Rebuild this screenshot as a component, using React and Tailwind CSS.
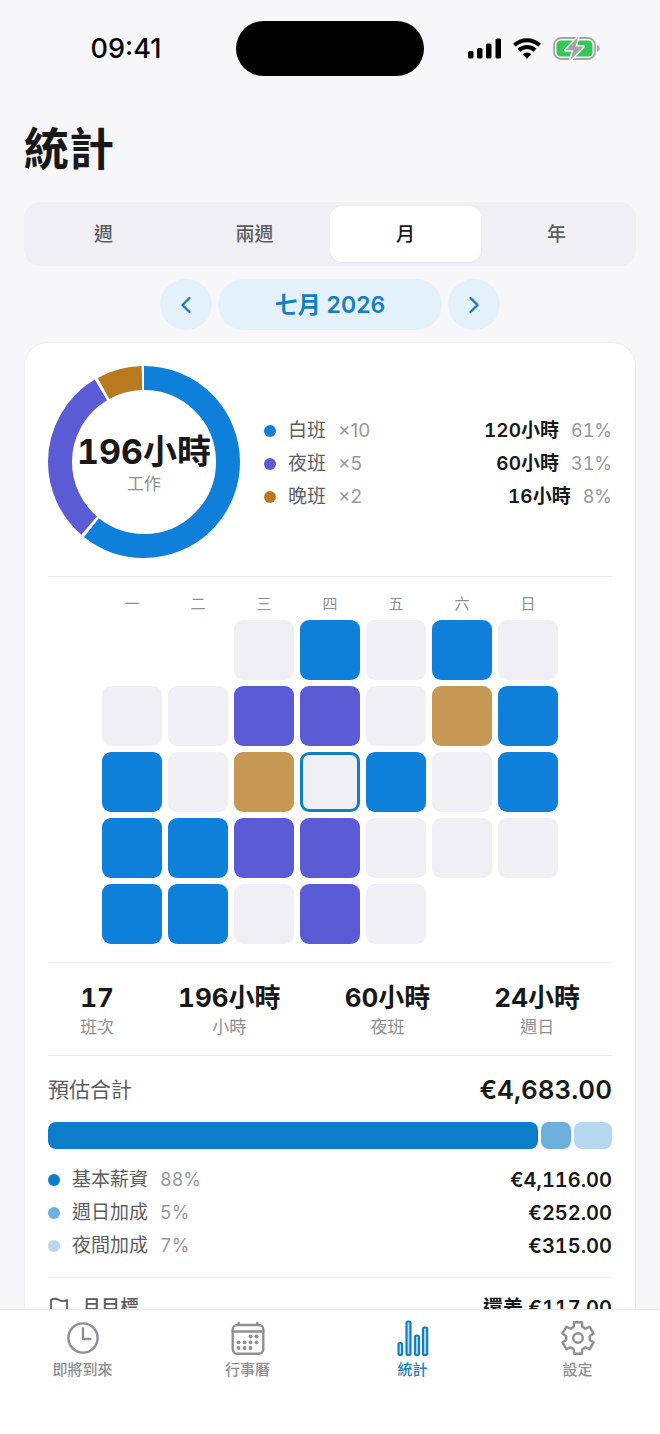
import { useState } from "react";
import { ChevronLeft, ChevronRight } from "lucide-react";

const PERIODS = ["週", "兩週", "月", "年"];
const WEEKDAYS = ["一", "二", "三", "四", "五", "六", "日"];

const SHIFTS = [
  { name: "白班", count: 10, hours: 120, percent: 61, color: "#0f80d9", dot: "bg-[#0f80d9]" },
  { name: "夜班", count: 5, hours: 60, percent: 31, color: "#5b5bd6", dot: "bg-[#5b5bd6]" },
  { name: "晚班", count: 2, hours: 16, percent: 8, color: "#b8791f", dot: "bg-[#b8791f]" },
];

// d = day shift, n = night shift, e = evening shift, o = day off, t = today, "." = outside the month
const MONTH = ["..ododo", "oonnoed", "doetdod", "ddnnooo", "ddono.."];

const CELL_STYLES = {
  d: "bg-[#0f80d9]",
  n: "bg-[#5b5bd6]",
  e: "bg-[#c79853]",
  o: "bg-[#f0f0f4]",
  t: "bg-[#f0f0f4] border-3 border-[#127fc4]",
  ".": "",
};

const SUMMARY = [
  { value: "17", label: "班次" },
  { value: "196小時", label: "小時" },
  { value: "60小時", label: "夜班" },
  { value: "24小時", label: "週日" },
];

const PAY = [
  { name: "基本薪資", percent: 88, amount: 4116, color: "bg-[#0b7dc9]" },
  { name: "週日加成", percent: 5, amount: 252, color: "bg-[#6db0de]" },
  { name: "夜間加成", percent: 7, amount: 315, color: "bg-[#b5d8ee]" },
];

const formatEuro = (amount) =>
  `€${amount.toLocaleString("en-US", { minimumFractionDigits: 2 })}`;

function StatusBar() {
  return (
    <div className="flex items-start pt-[21px] text-black">
      <div className="flex h-[55px] flex-1 items-center justify-center pt-0.5 pl-4 text-[27px] font-medium">
        09:41
      </div>
      <div className="h-[55px] w-[188px] rounded-full bg-black" />
      <div className="flex h-[55px] flex-1 items-center justify-center gap-3 pr-4">
        <svg width="33" height="21" viewBox="0 0 33 21" fill="currentColor" aria-hidden="true">
          <rect x="0" y="13" width="5.5" height="7.5" rx="1.6" />
          <rect x="9" y="10" width="5.5" height="10.5" rx="1.6" />
          <rect x="18" y="5.5" width="5.5" height="15" rx="1.6" />
          <rect x="27.5" y="0.5" width="5.5" height="20" rx="1.6" />
        </svg>
        <svg width="28" height="21" viewBox="0 0 28 21" fill="none" stroke="currentColor" strokeWidth="4" aria-hidden="true">
          <path d="M1.4 7.2a18.2 18.2 0 0 1 25.2 0" />
          <path d="M6 12.3a11.6 11.6 0 0 1 16 0" />
          <path d="M14 20.8l-4.4-4.5a6.2 6.2 0 0 1 8.8 0z" fill="currentColor" stroke="none" />
        </svg>
        <svg width="47" height="23" viewBox="0 0 47 23" aria-hidden="true">
          <rect x="1" y="1" width="41" height="21" rx="7" fill="none" stroke="#a5a5a9" strokeWidth="1.8" />
          <path d="M44 8v7c1.6-.6 2.6-1.9 2.6-3.5S45.6 8.6 44 8z" fill="#a5a5a9" />
          <rect x="3.5" y="3.5" width="36" height="16" rx="4.5" fill="#35c759" />
          <path
            d="M25 0L12.500 13.200h7.800L17.500 23l13-13.500h-8z"
            fill="#a5a5a9"
            stroke="#f7f7fa"
            strokeWidth="3"
            strokeLinejoin="round"
            paintOrder="stroke"
          />
        </svg>
      </div>
    </div>
  );
}

function Donut() {
  const radius = 84;
  const total = 2 * Math.PI * radius;
  const gap = 3;
  const sum = SHIFTS.reduce((acc, s) => acc + s.hours, 0);
  let start = 0;

  return (
    <div className="relative size-48 shrink-0">
      <svg viewBox="0 0 192 192" className="size-full -rotate-90" aria-hidden="true">
        {SHIFTS.map((s) => {
          const length = (s.hours / sum) * total;
          const offset = start;
          start += length;
          return (
            <circle
              key={s.name}
              cx="96"
              cy="96"
              r={radius}
              fill="none"
              stroke={s.color}
              strokeWidth="24"
              strokeDasharray={`${length - gap} ${total - length + gap}`}
              strokeDashoffset={-offset}
            />
          );
        })}
      </svg>
      <div className="absolute inset-0 flex flex-col items-center justify-center pt-1 whitespace-nowrap">
        <span className="text-[34px] leading-10 font-bold">{sum}小時</span>
        <span className="text-[17px] leading-6 text-[#8e8f94]">工作</span>
      </div>
    </div>
  );
}

function ClockIcon() {
  return (
    <svg width="36" height="36" viewBox="0 0 36 36" fill="none" stroke="currentColor" strokeWidth="2.4" strokeLinecap="round" aria-hidden="true">
      <circle cx="18" cy="18" r="14.6" />
      <path d="M18 8.5V19h7.2" strokeLinejoin="round" />
    </svg>
  );
}

function CalendarIcon() {
  const dots = [
    [20.5, 16.5], [26.5, 16.5],
    [8.5, 22.3], [14.5, 22.3], [20.5, 22.3], [26.5, 22.3],
    [8.5, 28], [14.5, 28], [20.5, 28],
  ];
  return (
    <svg width="36" height="36" viewBox="0 0 36 36" fill="none" stroke="currentColor" strokeWidth="2.4" strokeLinecap="round" aria-hidden="true">
      <rect x="2.7" y="5" width="30.6" height="28.8" rx="4.5" />
      <path d="M2.7 11.500h30.600M8.700 3v2M27.300 3v2" />
      {dots.map(([x, y]) => (
        <circle key={`${x}-${y}`} cx={x} cy={y} r="1.9" fill="currentColor" stroke="none" />
      ))}
    </svg>
  );
}

function ChartIcon() {
  return (
    <svg width="36" height="36" viewBox="0 0 36 36" fill="#b5d8ee" stroke="currentColor" strokeWidth="2.2" aria-hidden="true">
      <rect x="3.5" y="23" width="3.6" height="12" rx="1.5" />
      <rect x="11.5" y="1.500" width="4" height="33.500" rx="1.500" />
      <rect x="20" y="15.500" width="4" height="19.500" rx="1.500" />
      <rect x="28" y="7.500" width="4.200" height="27.500" rx="1.500" />
    </svg>
  );
}

// Six teeth around the centre, joined by scooped valleys
const polar = (r, deg) => {
  const a = (deg * Math.PI) / 180;
  return `${(18 + r * Math.cos(a)).toFixed(2)} ${(18 + r * Math.sin(a)).toFixed(2)}`;
};
const GEAR_PATH =
  [-90, -30, 30, 90, 150, 210]
    .map(
      (a, i) =>
        `${i ? "L" : "M"}${polar(16.2, a - 14)}L${polar(16.2, a + 14)}L${polar(13.4, a + 18)}Q${polar(11, a + 21)} ${polar(12, a + 30)}Q${polar(11, a + 39)} ${polar(13.4, a + 42)}`
    )
    .join("") + "Z";

function GearIcon() {
  return (
    <svg width="36" height="36" viewBox="0 0 36 36" fill="none" stroke="currentColor" strokeWidth="2.4" strokeLinejoin="round" aria-hidden="true">
      <path d={GEAR_PATH} />
      <circle cx="18" cy="18" r="4.8" />
    </svg>
  );
}

const TABS = [
  { label: "即將到來", Icon: ClockIcon },
  { label: "行事曆", Icon: CalendarIcon },
  { label: "統計", Icon: ChartIcon, active: true },
  { label: "設定", Icon: GearIcon },
];

export default function App() {
  const [period, setPeriod] = useState("月");

  return (
    <div
      lang="zh-Hant"
      className="flex h-screen flex-col bg-[#f7f7fa] font-['Inter','Noto_Sans_CJK_TC',sans-serif] text-[#17181a]"
    >
      <main className="min-h-0 flex-1 overflow-y-auto [scrollbar-width:none]">
        <StatusBar />

        <div className="px-6">
          <h1 className="mt-[42px] text-[45px] leading-[64px] font-bold">統計</h1>

          {/* Period switch */}
          <div className="mt-5 grid grid-cols-4 rounded-2xl bg-[#f0f0f4] p-1">
            {PERIODS.map((p) => (
              <button
                key={p}
                type="button"
                onClick={() => setPeriod(p)}
                className={
                  p === period
                    ? "h-14 rounded-xl bg-white pt-0.5 text-[19px] font-medium shadow-xs"
                    : "h-14 rounded-xl pt-0.5 text-[19px] font-medium text-[#5c5d63]"
                }
              >
                {p}
              </button>
            ))}
          </div>

          {/* Month picker */}
          <div className="mt-[13px] flex justify-center gap-1.5 text-[#127fc4]">
            <button type="button" aria-label="上個月" className="flex h-[51px] w-13 items-center justify-center rounded-full bg-[#e4f1fa]">
              <ChevronLeft size={28} />
            </button>
            <button type="button" className="h-[51px] w-56 rounded-full bg-[#e4f1fa] pt-0.5 text-[23px] font-semibold">
              七月 2026
            </button>
            <button type="button" aria-label="下個月" className="flex h-[51px] w-13 items-center justify-center rounded-full bg-[#e4f1fa]">
              <ChevronRight size={28} />
            </button>
          </div>

          <div className="mt-3 rounded-3xl border border-[#eeeef1] bg-white px-[23px] pt-[23px] pb-6 tabular-nums">
            {/* Hours per shift */}
            <section className="flex items-center gap-6 border-b border-[#eeeef1] pb-[18px]">
              <Donut />
              <ul className="flex flex-1 flex-col gap-[5px] pt-1 text-[19px] leading-7">
                {SHIFTS.map((s) => (
                  <li key={s.name} className="flex items-center">
                    <span className={`mr-3 size-3 rounded-full ${s.dot}`} />
                    <span className="text-[#5c5d63]">{s.name}</span>
                    <span className="ml-3 text-[#97989e] proportional-nums">×{s.count}</span>
                    <span className="ml-auto font-semibold">{s.hours}小時</span>
                    <span className="ml-3 text-[18px] text-[#97989e]">{s.percent}%</span>
                  </li>
                ))}
              </ul>
            </section>

            {/* Month heatmap */}
            <section className="flex justify-center border-b border-[#eeeef1] pt-[17px] pb-[18px]">
              <div className="grid grid-cols-7 gap-1.5">
                {WEEKDAYS.map((day) => (
                  <span key={day} className="text-center text-[15px] leading-5 text-[#8e8f94]">
                    {day}
                  </span>
                ))}
                {MONTH.flatMap((week, w) =>
                  [...week].map((cell, d) => (
                    <span key={`${w}-${d}`} className={`size-15 rounded-[9px] ${CELL_STYLES[cell]}`} />
                  ))
                )}
              </div>
            </section>

            <dl className="flex justify-around border-b border-[#eeeef1] pt-[18px] pb-4 text-center">
              {SUMMARY.map((item) => (
                <div key={item.label} className="flex flex-col-reverse">
                  <dt className="text-[17px] leading-6 text-[#8e8f94]">{item.label}</dt>
                  <dd className="text-[26px] leading-[34px] font-bold">{item.value}</dd>
                </div>
              ))}
            </dl>

            {/* Estimated pay */}
            <section className="border-b border-[#eeeef1] pt-4 pb-[17px]">
              <div className="flex items-center justify-between leading-9">
                <h2 className="text-[21px] text-[#5c5d63]">預估合計</h2>
                <span className="text-[26px] font-semibold">{formatEuro(4683)}</span>
              </div>
              <div className="mt-3.5 flex h-[27px] gap-[3px]">
                {PAY.map((p) => (
                  <span
                    key={p.name}
                    className={`basis-0 rounded-lg ${p.color}`}
                    style={{ flexGrow: p.amount }}
                  />
                ))}
              </div>
              <ul className="mt-[17px] flex flex-col gap-[5px] text-[19px] leading-7">
                {PAY.map((p) => (
                  <li key={p.name} className="flex items-center">
                    <span className={`mr-3 size-3 rounded-full ${p.color}`} />
                    <span className="text-[#5c5d63]">{p.name}</span>
                    <span className="ml-3 text-[18px] text-[#97989e]">{p.percent}%</span>
                    <span className="ml-auto text-[20px] font-semibold">{formatEuro(p.amount)}</span>
                  </li>
                ))}
              </ul>
            </section>

            {/* Monthly goal */}
            <section className="flex items-center pt-4 text-[19px] leading-7">
              <svg width="22" height="22" viewBox="0 0 22 22" fill="none" stroke="#5c5d63" strokeWidth="1.8" strokeLinejoin="round" strokeLinecap="round" aria-hidden="true">
                <path d="M3 21V3c3-2 5.500-1.500 8 0s5 1.500 8 0v11c-3 1.500-5.500 1.500-8 0s-5-1.500-8 0" />
              </svg>
              <span className="ml-3 font-medium text-[#5c5d63]">月目標</span>
              <span className="ml-auto text-[20px] font-semibold">還差 {formatEuro(117)}</span>
            </section>
          </div>
        </div>
      </main>

      <nav className="grid h-[125px] shrink-0 grid-cols-4 items-start border-t border-[#e8e8eb] bg-white pt-2.5">
        {TABS.map(({ label, Icon, active }) => (
          <a
            key={label}
            href="#"
            aria-current={active ? "page" : undefined}
            className={
              active
                ? "flex flex-col items-center gap-0.5 text-[15px] leading-6 font-medium text-[#127fc4]"
                : "flex flex-col items-center gap-0.5 text-[15px] leading-6 font-medium text-[#8e8f94]"
            }
          >
            <Icon />
            {label}
          </a>
        ))}
      </nav>
    </div>
  );
}
